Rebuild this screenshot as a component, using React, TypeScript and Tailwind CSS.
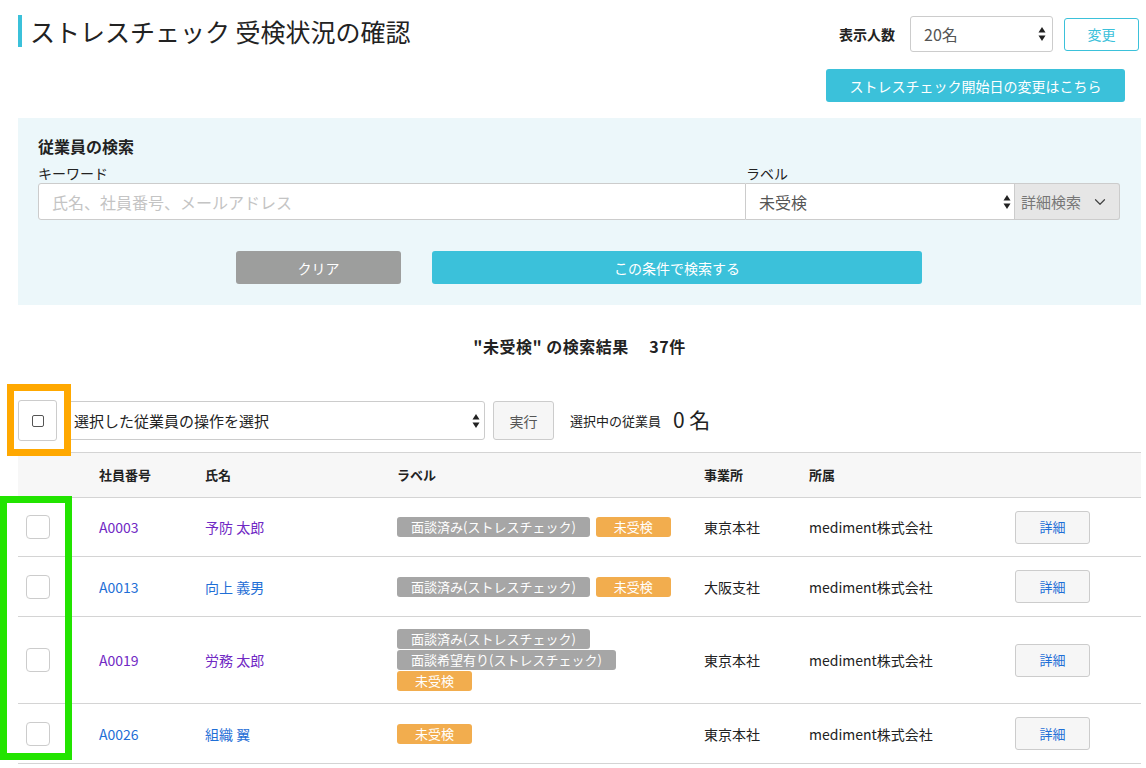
import React from "react";
import { ChevronDown } from "lucide-react";

type Badge = { text: string; kind: "gray" | "orange" };

type Row = {
  id: string;
  name: string;
  visited: boolean;
  badges: Badge[];
  stacked?: boolean;
  office: string;
  dept: string;
  height: string;
};

const rows: Row[] = [
  {
    id: "A0003",
    name: "予防 太郎",
    visited: true,
    badges: [
      { text: "面談済み(ストレスチェック)", kind: "gray" },
      { text: "未受検", kind: "orange" },
    ],
    office: "東京本社",
    dept: "mediment株式会社",
    height: "h-[59px]",
  },
  {
    id: "A0013",
    name: "向上 義男",
    visited: false,
    badges: [
      { text: "面談済み(ストレスチェック)", kind: "gray" },
      { text: "未受検", kind: "orange" },
    ],
    office: "大阪支社",
    dept: "mediment株式会社",
    height: "h-[60px]",
  },
  {
    id: "A0019",
    name: "労務 太郎",
    visited: true,
    badges: [
      { text: "面談済み(ストレスチェック)", kind: "gray" },
      { text: "面談希望有り(ストレスチェック)", kind: "gray" },
      { text: "未受検", kind: "orange" },
    ],
    stacked: true,
    office: "東京本社",
    dept: "mediment株式会社",
    height: "h-[87px]",
  },
  {
    id: "A0026",
    name: "組織 翼",
    visited: false,
    badges: [{ text: "未受検", kind: "orange" }],
    office: "東京本社",
    dept: "mediment株式会社",
    height: "h-[60px]",
  },
];

function SelectArrows() {
  return (
    <svg width="8" height="16" viewBox="0 0 8 16" className="shrink-0">
      <path d="M4 1 L7.5 6.5 L0.5 6.5 Z" fill="#222" />
      <path d="M4 15 L7.5 9.5 L0.5 9.5 Z" fill="#222" />
    </svg>
  );
}

function Tag({ badge }: { badge: Badge }) {
  return (
    <span
      className={
        "inline-block h-[20px] rounded-[3px] text-[13px] leading-[20px] text-white whitespace-nowrap " +
        (badge.kind === "gray" ? "bg-[#a6a6a6] px-[14px]" : "bg-[#f2ad4e] px-[18px]")
      }
    >
      {badge.text}
    </span>
  );
}

export default function App() {
  return (
    <div
      className="relative w-full min-h-[768px] bg-white text-[#333] pl-[18px] pr-[5px]"
      style={{ fontFamily: '"Noto Sans CJK JP", "Noto Sans", sans-serif' }}
    >
      {/* header */}
      <div className="flex justify-between pt-[15px]">
        <h1 className="border-l-[4px] border-[#3bc1da] pl-[8px] h-[32px] text-[25px] leading-[32px] font-normal text-[#222]">
          ストレスチェック 受検状況の確認
        </h1>
        <div className="flex flex-col items-end">
          <div className="flex items-center mt-[1px] mr-[2px]">
            <span className="text-[14px] font-bold text-[#222] leading-[20px]">表示人数</span>
            <div className="ml-[15px] w-[143px] h-[36px] border border-[#ccc] rounded-[3px] bg-white flex items-center justify-between pl-[13px] pr-[6px]">
              <span className="text-[16px] text-[#555] leading-[20px]">20名</span>
              <SelectArrows />
            </div>
            <button className="ml-[11px] w-[75px] h-[33px] border border-[#3bc1da] rounded-[3px] bg-white text-[14px] text-[#3bc1da] leading-[20px]">
              変更
            </button>
          </div>
          <button className="mt-[17px] mr-[16px] w-[299px] h-[33px] rounded-[3px] bg-[#3bc1da] text-white text-[14px] leading-[20px]">
            ストレスチェック開始日の変更はこちら
          </button>
        </div>
      </div>

      {/* search panel */}
      <div className="mt-[16px] bg-[#ecf7fa] pl-[20px] pr-[21px] pt-[17px] pb-[21px]">
        <div className="text-[16px] font-bold text-[#222] leading-[22px]">従業員の検索</div>
        <div className="flex mt-[6px]">
          <div className="flex-1 flex flex-col">
            <span className="text-[14px] leading-[20px] text-[#222]">キーワード</span>
            <div className="h-[37px] bg-white border border-[#ccc] rounded-l-[3px] flex items-center pl-[13px]">
              <span className="text-[16px] text-[#c4c4c4] leading-[20px]">氏名、社員番号、メールアドレス</span>
            </div>
          </div>
          <div className="w-[269px] flex flex-col">
            <span className="text-[14px] leading-[20px] text-[#222]">ラベル</span>
            <div className="h-[37px] bg-white border border-[#ccc] border-l-0 flex items-center justify-between pl-[13px] pr-[3px]">
              <span className="text-[16px] text-[#555] leading-[20px]">未受検</span>
              <SelectArrows />
            </div>
          </div>
          <div className="w-[105px] flex flex-col">
            <span className="h-[20px]" />
            <div className="h-[37px] bg-[#e6e6e6] border border-[#ccc] border-l-0 rounded-r-[3px] flex items-center justify-between pl-[6px] pr-[10px]">
              <span className="text-[15px] text-[#777] leading-[20px]">詳細検索</span>
              <ChevronDown className="w-[18px] h-[18px] text-[#444]" strokeWidth={1.6} />
            </div>
          </div>
        </div>
        <div className="flex justify-center gap-[31px] mt-[31px]">
          <button className="w-[165px] h-[33px] rounded-[3px] bg-[#9d9e9d] text-white text-[14px] leading-[20px]">
            クリア
          </button>
          <button className="w-[490px] h-[33px] rounded-[3px] bg-[#3bc1da] text-white text-[14px] leading-[20px]">
            この条件で検索する
          </button>
        </div>
      </div>

      {/* result */}
      <div className="mt-[31px] text-center text-[16px] font-bold text-[#222] leading-[20px] tracking-[0.5px]">
        "未受検" の検索結果　 37件
      </div>

      {/* actions */}
      <div className="flex items-center mt-[44px]">
        <div className="w-[39px] h-[41px] border border-[#ccc] rounded-[3px] bg-white flex items-center justify-center">
          <span className="w-[12px] h-[12px] border border-[#555] rounded-[2px]" />
        </div>
        <div className="ml-[8px] w-[420px] h-[39px] border border-[#ccc] rounded-[3px] bg-white flex items-center justify-between pl-[8px] pr-[4px]">
          <span className="text-[15px] text-[#222] leading-[20px]">選択した従業員の操作を選択</span>
          <SelectArrows />
        </div>
        <button className="ml-[8px] w-[61px] h-[39px] border border-[#ccc] rounded-[3px] bg-[#f6f6f6] text-[14px] text-[#555] leading-[20px]">
          実行
        </button>
        <span className="ml-[16px] text-[13px] text-[#222] leading-[20px]">選択中の従業員</span>
        <span className="ml-[12px] text-[21px] text-[#222] leading-[24px] -mt-[4px]">0 名</span>
      </div>

      {/* table */}
      <div className="mt-[11px]">
        <div className="grid grid-cols-[81px_106px_192px_307px_105px_206px_1fr] items-center h-[46px] bg-[#f7f7f7] border-y border-[#d4d4d4] text-[13px] font-bold text-[#222] leading-[20px]">
          <span />
          <span>社員番号</span>
          <span>氏名</span>
          <span>ラベル</span>
          <span>事業所</span>
          <span>所属</span>
          <span />
        </div>
        {rows.map((r) => {
          const link = r.visited ? "text-[#7029c4]" : "text-[#1f6fd6]";
          return (
            <div
              key={r.id}
              className={
                "grid grid-cols-[81px_106px_192px_307px_105px_206px_1fr] items-center border-b border-[#d4d4d4] text-[14px] leading-[20px] " +
                r.height
              }
            >
              <span className="ml-[8px] w-[24px] h-[24px] border border-[#ccc] rounded-[4px] bg-white" />
              <span className={link}>{r.id}</span>
              <span className={link}>{r.name}</span>
              <div className={r.stacked ? "flex flex-col items-start gap-[1px]" : "flex items-center gap-[6px]"}>
                {r.badges.map((b, i) => (
                  <Tag key={i} badge={b} />
                ))}
              </div>
              <span className="text-[#222]">{r.office}</span>
              <span className="text-[#222]">{r.dept}</span>
              <div>
                <button className="w-[75px] h-[33px] border border-[#ccc] rounded-[3px] bg-[#f6f6f6] text-[13px] text-[#1f6fd6] leading-[20px]">
                  詳細
                </button>
              </div>
            </div>
          );
        })}
      </div>

      {/* annotation highlights */}
      <div className="absolute left-[7px] top-[384px] w-[64px] h-[72px] border-[7px] border-[#ffa800] pointer-events-none" />
      <div className="absolute left-0 top-[496px] w-[72px] h-[264px] border-[7px] border-[#22e400] pointer-events-none" />
    </div>
  );
}
